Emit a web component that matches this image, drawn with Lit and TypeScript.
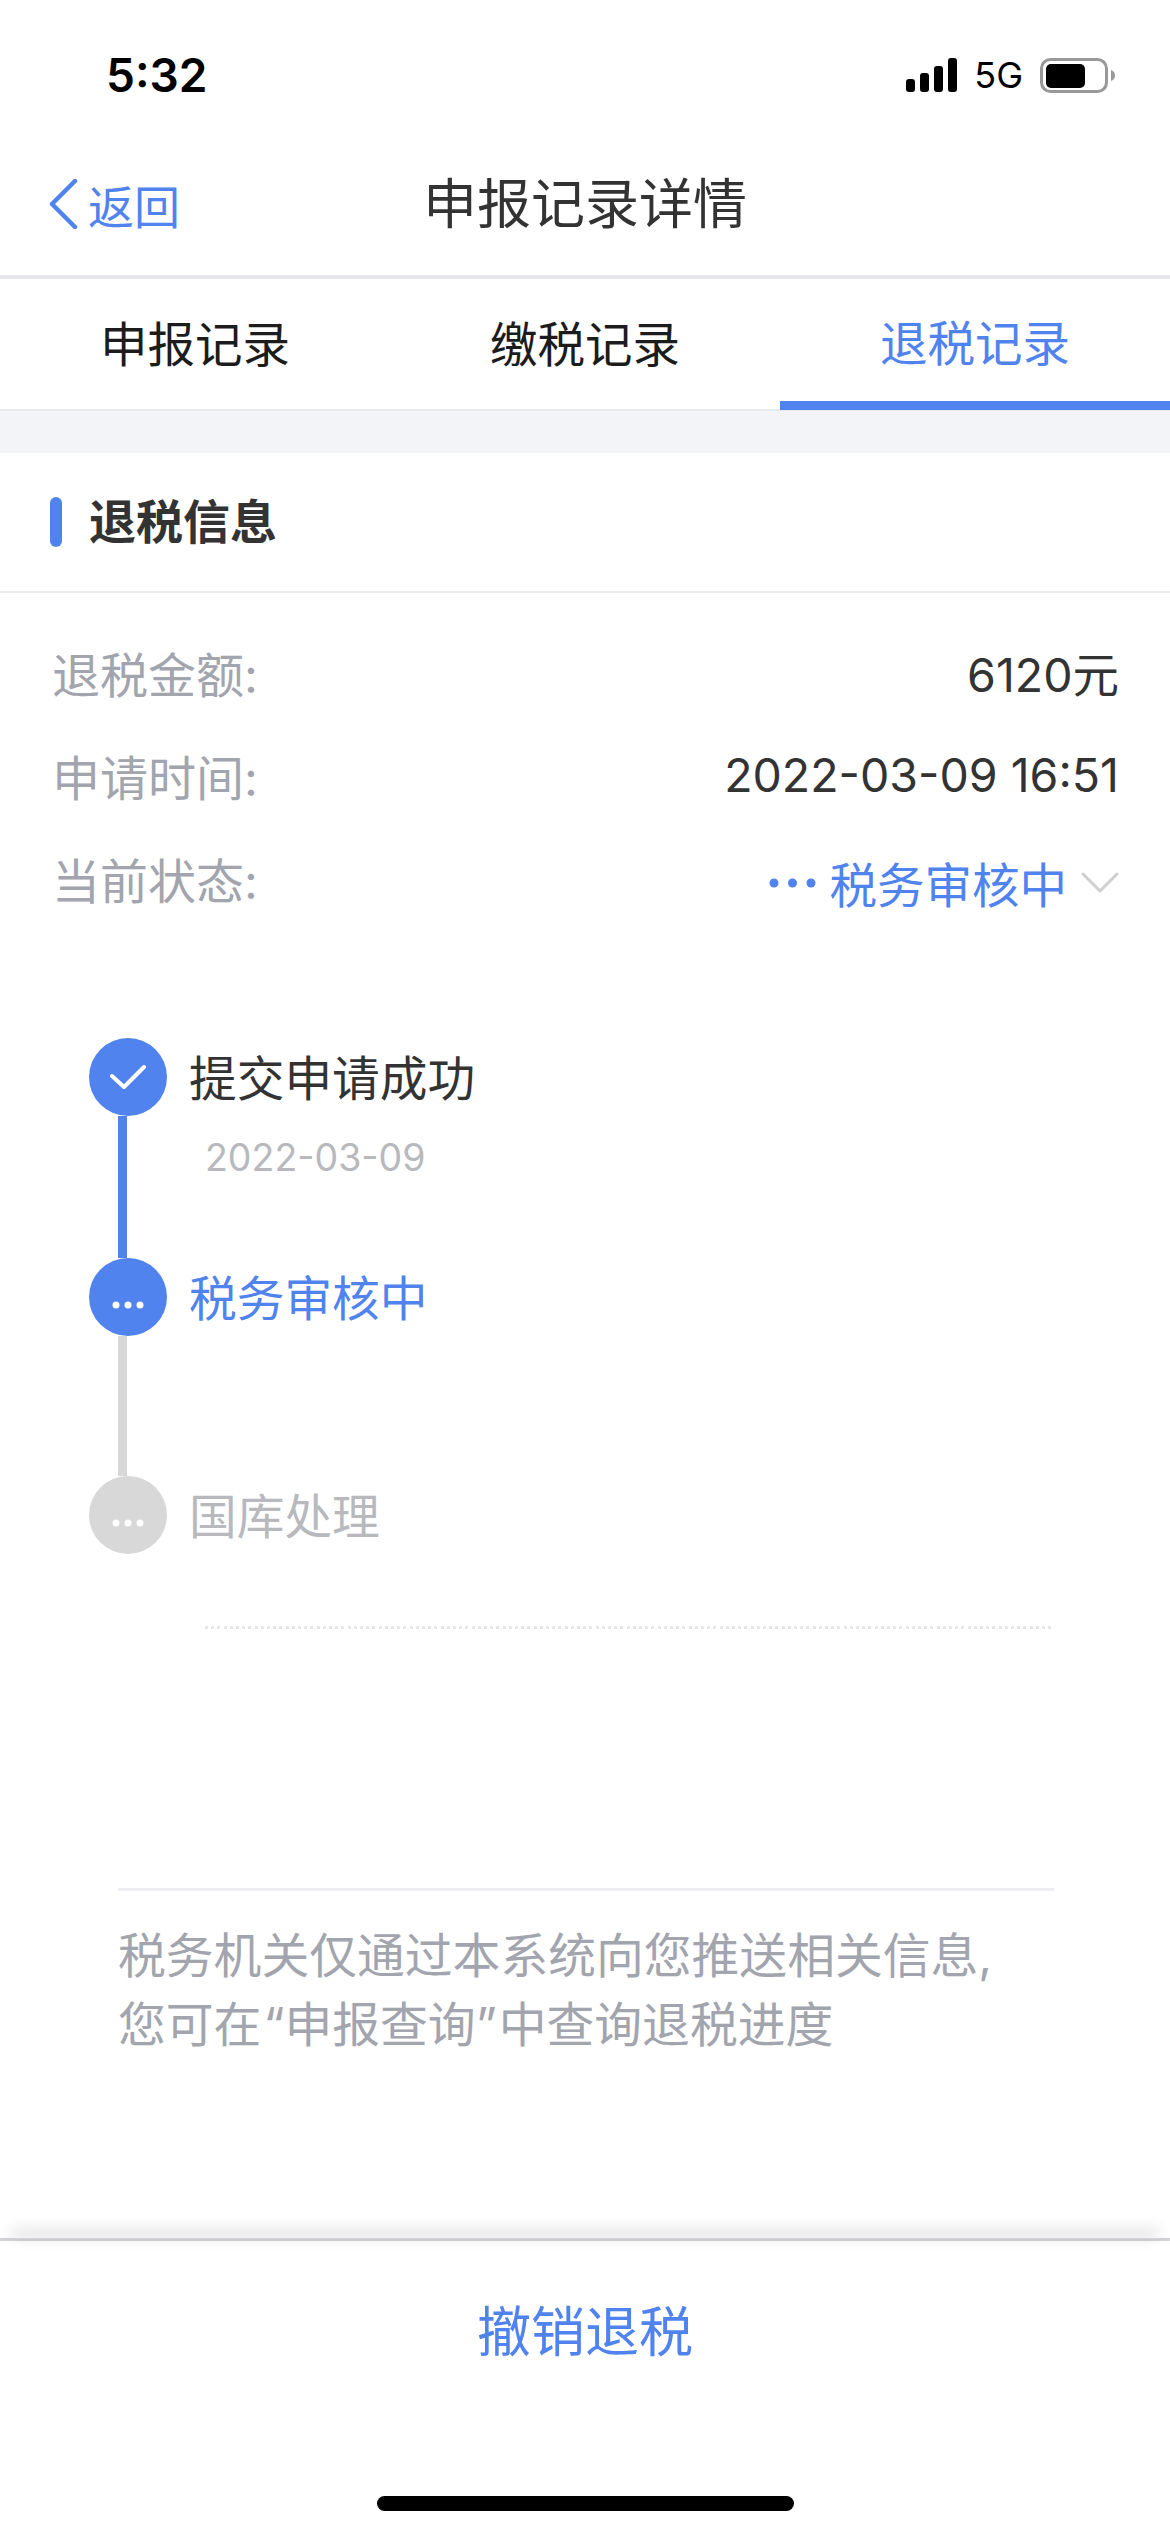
import { LitElement, html, css } from "lit";
import { customElement } from "lit/decorators.js";

@customElement("app-root")
export class AppRoot extends LitElement {
  static styles = css`
    :host {
      display: flex;
      flex-direction: column;
      width: 1170px;
      height: 2532px;
      background: #fff;
      font-family: Inter, "Noto Sans CJK SC", sans-serif;
      color: #333;
      overflow: hidden;
    }
    .status {
      height: 150px;
      flex: none;
      display: flex;
      align-items: center;
      justify-content: space-between;
      padding: 0 55px 0 106px;
      box-sizing: border-box;
      color: #000;
    }
    .time { font-size: 46px; font-weight: 600; line-height: 1; }
    .status-right { display: flex; align-items: center; gap: 17px; }
    .net { font-size: 36px; line-height: 1; font-weight: 400; }
    .nav {
      flex: none;
      height: 110px;
      padding-bottom: 15px;
      display: grid;
      grid-template-columns: 1fr auto 1fr;
      align-items: center;
      border-bottom: 4px solid #e5e5ea;
    }
    .back {
      display: flex;
      align-items: center;
      gap: 10px;
      padding-left: 48px;
      color: #5083ee;
      font-size: 46px;
      margin-top: -2px;
    }
    .title { font-size: 54px; line-height: 1; }
    .tabs {
      flex: none;
      height: 130px;
      display: grid;
      grid-template-columns: repeat(3, 1fr);
      border-bottom: 2px solid #e8e8ea;
    }
    .tab {
      display: flex;
      align-items: center;
      justify-content: center;
      font-size: 47.500px;
      color: #1c1c1c;
      padding-bottom: 6px;
    }
    .tab.on {
      color: #5083ee;
      border-bottom: 9px solid #5083ee;
      padding-bottom: 0;
      margin-bottom: -1px;
    }
    .gap { flex: none; height: 42px; background: #f3f4f8; }
    .head {
      flex: none;
      height: 138px;
      display: flex;
      align-items: center;
      gap: 27px;
      padding-left: 50px;
      border-bottom: 2px solid #ebebed;
      font-size: 47px;
      font-weight: 600;
    }
    .head-text { margin-bottom: 8px; }
    .mark { width: 12px; height: 50px; border-radius: 6px; background: #5083ee; }
    .rows { flex: none; padding: 27px 51px 0 52px; }
    .row {
      height: 103px;
      display: flex;
      align-items: center;
      justify-content: space-between;
    }
    .label { color: #a2a5ad; font-size: 48px; }
    .value { color: #333; font-size: 46.500px; }
    .state {
      display: flex;
      align-items: center;
      gap: 14px;
      color: #5083ee;
      font-size: 47.500px;
      padding-top: 10px;
    }
    .timeline { flex: none; margin: 109px 0 0 89px; }
    .step { display: flex; align-items: flex-start; }
    .rail { flex: none; width: 78px; display: flex; flex-direction: column; }
    .dot {
      width: 78px;
      height: 78px;
      border-radius: 50%;
      background: #5083ee;
      display: flex;
      align-items: center;
      justify-content: center;
    }
    .dot.off { background: #d8d8d8; }
    .line { width: 9px; margin-left: 29px; background: #5083ee; }
    .line.off { background: #d8d8d8; }
    .line.a { height: 142px; }
    .line.b { height: 140px; }
    .text { padding: 2px 0 0 22px; font-size: 47.700px; line-height: 78px; color: #333; }
    .text.active { color: #5083ee; }
    .text.off { color: #b8b9bd; }
    .date { font-size: 37.500px; line-height: 1; color: #b8b9bd; margin: 21px 0 0 16px; }
    .dotted {
      flex: none;
      margin: 70px 118px 0 205px;
      height: 3px;
      background: repeating-linear-gradient(to right, #e6e6ea 0 3px, transparent 3px 6.200px);
    }
    .note {
      flex: none;
      margin: 259px 116px 0 118px;
      padding-top: 31px;
      border-top: 3px solid #eceef2;
      font-size: 47.800px;
      line-height: 69px;
      color: #a2a5ad;
    }
    .quote { margin: 0 2px; }
    .foot {
      flex: none;
      margin-top: auto;
      height: 294px;
      box-sizing: border-box;
      border-top: 3px solid #d4d4d8;
      background: #fff;
      display: flex;
      flex-direction: column;
      align-items: center;
      position: relative;
    }
    .shade {
      position: absolute;
      left: 14px;
      right: 14px;
      top: -3px;
      height: 1px;
      box-shadow: 0 -5px 14px 3px rgba(0, 0, 0, 0.16);
    }
    .cancel { margin-top: 57px; font-size: 54px; line-height: 70px; color: #5083ee; }
    .home { margin-top: 128px; width: 417px; height: 15px; border-radius: 8px; background: #000; }
  `;

  render() {
    return html`
      <div class="status">
        <span class="time">5:32</span>
        <div class="status-right">
          <svg width="51" height="34" viewBox="0 0 51 34">
            <rect x="0" y="21" width="9" height="13" rx="3" />
            <rect x="14" y="15" width="9" height="19" rx="3" />
            <rect x="28" y="8" width="9" height="26" rx="3" />
            <rect x="42" y="0" width="9" height="34" rx="3" />
          </svg>
          <span class="net">5G</span>
          <svg width="75" height="35" viewBox="0 0 75 35">
            <rect x="1.500" y="1.500" width="65" height="32" rx="9" fill="none" stroke="#999" stroke-width="3" />
            <rect x="6" y="6" width="39" height="24" rx="5" />
            <path d="M71 12c3 1 4 3 4 5.500s-1 4.500-4 5.500z" fill="#999" />
          </svg>
        </div>
      </div>

      <div class="nav">
        <div class="back">
          <svg width="30" height="50" viewBox="0 0 30 50">
            <path d="M27 2 L4 25 L27 48" fill="none" stroke="#5083ee" stroke-width="4.500" stroke-linecap="round" stroke-linejoin="round" />
          </svg>
          <span>返回</span>
        </div>
        <div class="title">申报记录详情</div>
        <div></div>
      </div>

      <div class="tabs">
        <div class="tab">申报记录</div>
        <div class="tab">缴税记录</div>
        <div class="tab on">退税记录</div>
      </div>
      <div class="gap"></div>

      <div class="head"><span class="mark"></span><span class="head-text">退税信息</span></div>

      <div class="rows">
        <div class="row"><span class="label">退税金额:</span><span class="value">6120元</span></div>
        <div class="row"><span class="label">申请时间:</span><span class="value">2022-03-09 16:51</span></div>
        <div class="row">
          <span class="label">当前状态:</span>
          <span class="state">
            <svg width="47" height="10" viewBox="0 0 47 10" fill="#5083ee">
              <circle cx="5" cy="5" r="4.500" /><circle cx="23.500" cy="5" r="4.500" /><circle cx="42" cy="5" r="4.500" />
            </svg>
            <span>税务审核中</span>
            <svg width="38" height="22" viewBox="0 0 38 22">
              <path d="M2 2 L19 19 L36 2" fill="none" stroke="#cfcfcf" stroke-width="3" stroke-linecap="round" stroke-linejoin="round" />
            </svg>
          </span>
        </div>
      </div>

      <div class="timeline">
        <div class="step">
          <div class="rail">
            <div class="dot">
              <svg width="36" height="26" viewBox="0 0 36 26">
                <path d="M2 12 L14 23 L34 3" fill="none" stroke="#fff" stroke-width="4" stroke-linecap="round" stroke-linejoin="round" />
              </svg>
            </div>
            <div class="line a"></div>
          </div>
          <div class="text">提交申请成功<div class="date">2022-03-09</div></div>
        </div>
        <div class="step">
          <div class="rail">
            <div class="dot">
              <svg width="34" height="78" viewBox="0 0 34 78" fill="#fff">
                <circle cx="5" cy="47" r="3.500" /><circle cx="17" cy="47" r="3.500" /><circle cx="29" cy="47" r="3.500" />
              </svg>
            </div>
            <div class="line b off"></div>
          </div>
          <div class="text active">税务审核中</div>
        </div>
        <div class="step">
          <div class="rail">
            <div class="dot off">
              <svg width="34" height="78" viewBox="0 0 34 78" fill="#fff">
                <circle cx="5" cy="47" r="3.500" /><circle cx="17" cy="47" r="3.500" /><circle cx="29" cy="47" r="3.500" />
              </svg>
            </div>
          </div>
          <div class="text off">国库处理</div>
        </div>
      </div>

      <div class="dotted"></div>

      <div class="note">税务机关仅通过本系统向您推送相关信息,<br />您可在<span class="quote">“申报查询”</span>中查询退税进度</div>

      <div class="foot">
        <div class="shade"></div>
        <div class="cancel">撤销退税</div>
        <div class="home"></div>
      </div>
    `;
  }
}
